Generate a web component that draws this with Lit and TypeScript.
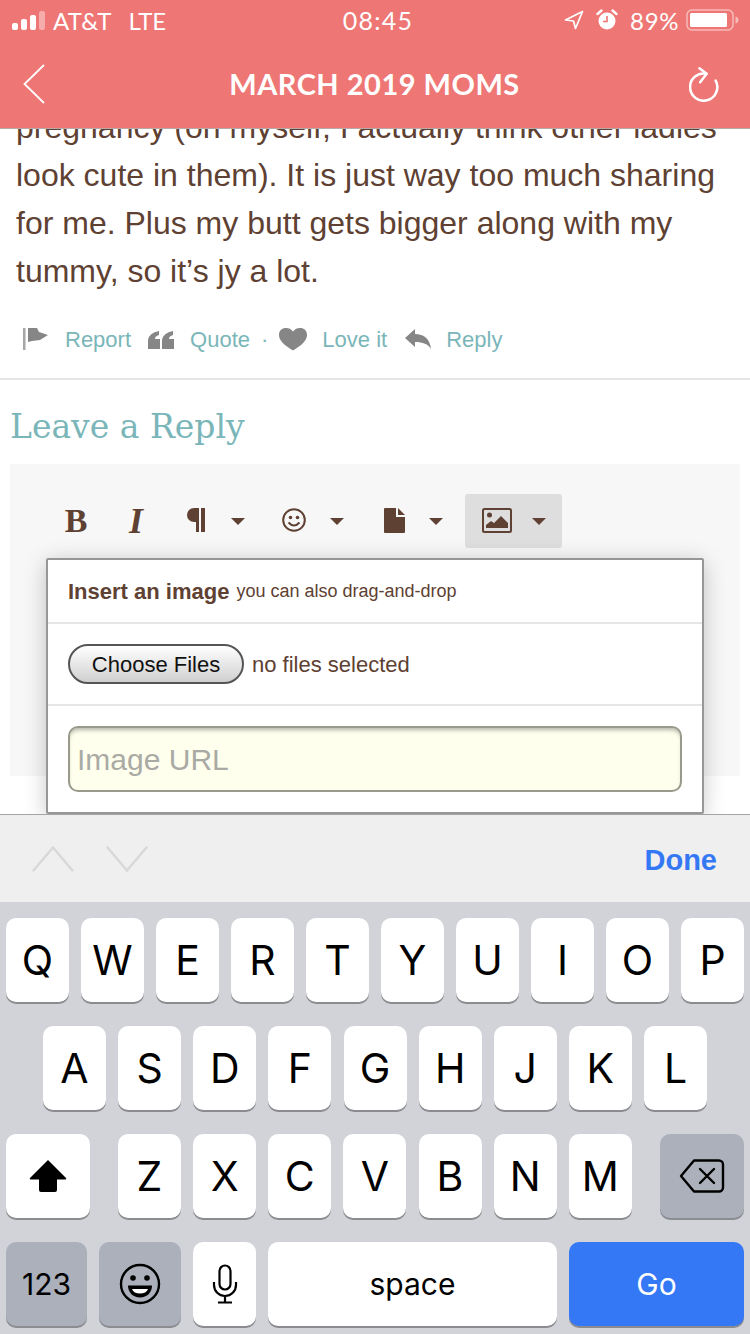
import { LitElement, html, css } from "lit";
import { customElement } from "lit/decorators.js";

const row1 = "QWERTYUIOP".split("");
const row2 = "ASDFGHJKL".split("");
const row3 = "ZXCVBNM".split("");

@customElement("app-root")
export class AppRoot extends LitElement {
  static styles = css`
    :host { display: block; width: 750px; height: 1334px; position: relative; overflow: hidden; background: #fff; font-family: "Liberation Sans", sans-serif; }
    .top { height: 129px; background: #ee7674; color: #fff; border-bottom: 1px solid #b9a9a6; box-sizing: border-box; position: relative; z-index: 2; margin-bottom: -1px; }
    .status { height: 40px; display: flex; align-items: center; font-family: Lato, sans-serif; font-size: 24px; padding: 0 10px 0 12px; position: relative; }
    .signal { display: flex; align-items: flex-end; gap: 3px; height: 19px; margin-right: 8px; }
    .signal i { display: block; width: 6px; background: #fff; border-radius: 2px; }
    .signal i.dim { background: rgba(255,255,255,.4); }
    .carrier { letter-spacing: .1px; }
    .lte { margin-left: 17px; letter-spacing: -.3px; }
    .time { position: absolute; left: 6px; right: 0; text-align: center; font-size: 25px; letter-spacing: 1.2px; }
    .sright { margin-left: auto; display: flex; align-items: center; }
    .pct { margin: 0 7px 0 12px; letter-spacing: .6px; }
    .nav { height: 87px; display: grid; grid-template-columns: 1fr auto 1fr; align-items: center; padding: 0 31px 0 22px; }
    .nav svg:last-child { justify-self: end; }
    .title { font-family: Lato, sans-serif; font-weight: 700; font-size: 29px; letter-spacing: .5px; margin-left: 8px; }
    .content { height: 686px; overflow: hidden; position: relative; }
    .post { margin: -25px 0 0; padding: 0 16px; font-size: 32px; line-height: 48px; color: #5e4132; white-space: nowrap; }
    .actions { display: flex; align-items: center; height: 48px; margin-top: 21px; padding-left: 23px; color: #7ab6b9; font-size: 22px; }
    .actions span { display: block; }
    .icon { display: flex; position: relative; top: 2px; }
    .rule { height: 2px; background: #e5e5e5; margin-top: 14px; }
    h2 { margin: 27px 0 0 10px; font-family: "DejaVu Serif", serif; font-weight: 400; font-size: 33px; line-height: 40px; color: #7ab6b9; }
    .editor { margin: 17px 10px 0; height: 312px; background: #f7f7f7; padding: 30px 0 0 38px; box-sizing: border-box; }
    .tools { display: flex; align-items: center; height: 54px; color: #5e4132; }
    .tool { display: flex; align-items: center; justify-content: center; }
    .tool svg { position: relative; top: -1px; }
    .bold { width: 22px; margin-left: 17px; font: 700 34px "Liberation Serif", serif; }
    .ital { width: 20px; margin-left: 39px; font: italic 700 36px "Liberation Serif", serif; }
    .caret { width: 0; height: 0; border-left: 7px solid transparent; border-right: 7px solid transparent; border-top: 7px solid #5e4132; }
    .active { background: #dedede; border-radius: 3px; height: 54px; width: 97px; gap: 20px; margin-left: 22px; }
    .popup { position: absolute; left: 46px; top: 430px; width: 658px; height: 256px; box-sizing: border-box; background: #fff; border: 2px solid #979797; border-radius: 2px; box-shadow: 0 4px 22px rgba(0,0,0,.22); color: #5e4132; }
    .ph { height: 61px; display: flex; align-items: center; padding: 1px 0 0 20px; font-size: 18px; border-bottom: 2px solid #e5e5e5; }
    .ph b { font-size: 22px; margin-right: 7px; }
    .pf { height: 80px; display: flex; align-items: center; padding-left: 20px; font-size: 22px; border-bottom: 2px solid #e5e5e5; }
    .file { width: 176px; height: 40px; box-sizing: border-box; border: 2px solid #555; border-radius: 20px; background: linear-gradient(#fff, #d0d0d0); color: #111; display: flex; align-items: center; justify-content: center; margin-right: 8px; font-size: 22px; padding-top: 2px; }
    .fname { padding-top: 2px; }
    .pu { padding: 20px; }
    .url { height: 66px; box-sizing: border-box; border: 2px solid #9a9a8c; border-radius: 10px; background: #ffffee; box-shadow: inset 0 4px 4px -2px rgba(0,0,0,.3); display: flex; align-items: center; padding: 2px 0 0 7px; color: #aaaaa5; font-size: 30px; }
    .acc { height: 88px; box-sizing: border-box; background: #efefef; border-top: 1px solid #a4a4a4; display: flex; align-items: center; padding: 0 33px 0 32px; position: relative; z-index: 1; }
    .done { margin-left: auto; color: #3478f6; font-size: 29px; font-weight: 700; padding-top: 3px; }
    .kbd { height: 432px; background: #d1d3d9; box-sizing: border-box; padding-top: 16px; font-family: Inter, sans-serif; color: #000; }
    .kr { display: flex; gap: 12.125px; height: 84px; margin-bottom: 24px; padding-left: 6px; }
    .kr1 { gap: 12px; }
    .kr2 { padding-left: 43px; }
    .k { width: 63px; height: 84px; background: #fff; border-radius: 10px; box-shadow: 0 2px 0 #8b8c90; display: flex; align-items: center; justify-content: center; font-size: 41px; flex: none; }
    .k.g { background: #abb0bb; }
    .shift { width: 84px; margin-right: 15.875px; }
    .back { margin-left: 16px; width: 84px; }
    .kr4 { gap: 12px; }
    .n123 { width: 81px; font-size: 30px; }
    .emo { width: 82px; }
    .space { width: 289px; font-size: 30px; }
    .go { width: 175px; background: #3478f6; color: #fff; font-size: 30px; }
    .acc-next { margin-left: 32px; }
  `;

  private flag() { return html`<svg width="26" height="24" viewBox="0 0 26 24"><rect x="0" y="1" width="2.500" height="22" fill="#a6a6a6"/><path d="M5 1h9l2 4 9 3-8 5-8 1-4 1z" fill="#868686"/></svg>`; }
  private quote() { return html`<svg width="26" height="18" viewBox="0 0 26 18"><path d="M0 9Q1 2 11 0v4Q7 5 7 8h5v10H0zM14 9Q15 2 25 0v4Q21 5 21 8h5v10H14z" fill="#868686"/></svg>`; }
  private heart() { return html`<svg width="28" height="24" viewBox="0 0 28 24"><path d="M14 23.500C5 18 0 13.500 0 8c0-4.500 3-7 7-7 3 0 5 1 7 3.500C16 2 18 1 21 1c4 0 7 2.500 7 7 0 5.500-5 10-14 15.500z" fill="#868686"/></svg>`; }
  private reply() { return html`<svg width="26" height="20" viewBox="0 0 26 20"><path d="M10 0v5c9 0 15 5 16 15-3-5-8-7-16-7v5L0 9z" fill="#868686"/></svg>`; }

  render() {
    return html`
      <div class="top">
        <div class="status">
          <div class="signal"><i style="height:7px"></i><i style="height:11px"></i><i style="height:15px"></i><i class="dim" style="height:19px"></i></div>
          <span class="carrier">AT&amp;T</span><span class="lte">LTE</span>
          <span class="time">08:45</span>
          <div class="sright">
            <svg width="20" height="20" viewBox="0 0 20 20"><path d="M18.500 1.500 1.500 10l8 1 2 7.500z" fill="none" stroke="#fff" stroke-width="1.700" stroke-linejoin="round"/></svg>
            <svg style="margin-left:12px" width="22" height="22" viewBox="0 0 22 22"><circle cx="11" cy="12" r="8.500" fill="#fff"/><path d="M11 7v5.500H7" fill="none" stroke="#ee7674" stroke-width="1.600"/><path d="M1.500 5l4-3.500M20.500 5l-4-3.500" stroke="#fff" stroke-width="2.400" stroke-linecap="round"/></svg>
            <span class="pct">89%</span>
            <svg width="54" height="24" viewBox="0 0 54 24"><rect x="1" y="2" width="46" height="20" rx="5" fill="none" stroke="#fff" stroke-opacity=".5" stroke-width="1.500"/><rect x="4" y="5" width="37" height="14" rx="1.500" fill="#fff"/><path d="M49.500 8.500c2 .4 3 2 3 3.500s-1 3-3 3.500z" fill="#fff" fill-opacity=".5"/></svg>
          </div>
        </div>
        <div class="nav">
          <svg width="24" height="40" viewBox="0 0 24 40"><path d="M22 1 2.500 20 22 39" fill="none" stroke="#fff" stroke-width="1.800"/></svg>
          <span class="title">MARCH 2019 MOMS</span>
          <svg width="30" height="36" viewBox="0 0 30 37"><path d="M17.700 8A14 14 0 1 0 27 15" fill="none" stroke="#fff" stroke-width="2.600" stroke-linecap="round"/><path d="M10.300 2.300 17.700 8 11 16.700" fill="none" stroke="#fff" stroke-width="2.600" stroke-linecap="round" stroke-linejoin="round"/></svg>
        </div>
      </div>
      <div class="content">
        <div class="post">
          pregnancy (oh myself, I actually think other ladies<br>
          look cute in them). It is just way too much sharing<br>
          for me. Plus my butt gets bigger along with my<br>
          tummy, so it’s jy a lot.
        </div>
        <div class="actions">
          <span class="icon">${this.flag()}</span><span style="margin-left:16px">Report</span>
          <span class="icon" style="margin-left:17px">${this.quote()}</span><span style="margin-left:16px">Quote</span>
          <span style="margin-left:11px">·</span>
          <span class="icon" style="margin-left:11px">${this.heart()}</span><span style="margin-left:15px">Love it</span>
          <span class="icon" style="margin-left:18px">${this.reply()}</span><span style="margin-left:15px">Reply</span>
        </div>
        <div class="rule"></div>
        <h2>Leave a Reply</h2>
        <div class="editor">
          <div class="tools">
            <div class="tool bold">B</div>
            <div class="tool ital">I</div>
            <div class="tool" style="margin-left:39px"><svg width="22" height="26" viewBox="0 0 22 26"><path d="M11 1H9a7 7 0 0 0 0 14h2v10h3V1zM16 1h4v24h-4z" fill="#5e4132"/></svg></div>
            <div class="caret" style="margin-left:24px"></div>
            <div class="tool" style="margin-left:37px"><svg width="24" height="24" viewBox="0 0 24 24"><circle cx="12" cy="12" r="10.800" fill="none" stroke="#5e4132" stroke-width="2"/><circle cx="8.500" cy="9.500" r="1.800" fill="#5e4132"/><circle cx="15.500" cy="9.500" r="1.800" fill="#5e4132"/><path d="M6.500 14.500q5.500 6 11 0" fill="none" stroke="#5e4132" stroke-width="2"/></svg></div>
            <div class="caret" style="margin-left:24px"></div>
            <div class="tool" style="margin-left:40px"><svg width="21" height="25" viewBox="0 0 21 25"><path d="M1 0h11v9h9v15a1 1 0 0 1-1 1H1a1 1 0 0 1-1-1V1a1 1 0 0 1 1-1zM14 0l7 7h-7z" fill="#5e4132"/></svg></div>
            <div class="caret" style="margin-left:24px"></div>
            <div class="tool active">
              <svg width="30" height="25" viewBox="0 0 30 25"><rect x="1" y="1" width="28" height="23" rx="1.500" fill="none" stroke="#5e4132" stroke-width="2"/><circle cx="7.500" cy="7" r="2.500" fill="#5e4132"/><path d="M4 20v-3l5-4 3 2 7-7 7 7v5z" fill="#5e4132"/></svg>
              <div class="caret"></div>
            </div>
          </div>
        </div>
        <div class="popup">
          <div class="ph"><b>Insert an image</b> you can also drag-and-drop</div>
          <div class="pf"><div class="file">Choose Files</div><span class="fname">no files selected</span></div>
          <div class="pu"><div class="url">Image URL</div></div>
        </div>
      </div>
      <div class="acc">
        <svg width="42" height="26" viewBox="0 0 42 26"><path d="M1.500 24.500 21 1.500l19.500 23" fill="none" stroke="#d8d8d8" stroke-width="2.400" stroke-linecap="round"/></svg>
        <svg class="acc-next" width="42" height="26" viewBox="0 0 42 26"><path d="M1.500 1.500 21 24.500 40.500 1.500" fill="none" stroke="#d8d8d8" stroke-width="2.400" stroke-linecap="round"/></svg>
        <span class="done">Done</span>
      </div>
      <div class="kbd">
        <div class="kr kr1">${row1.map((k) => html`<div class="k">${k}</div>`)}</div>
        <div class="kr kr2">${row2.map((k) => html`<div class="k">${k}</div>`)}</div>
        <div class="kr">
          <div class="k shift"><svg width="38" height="34" viewBox="0 0 38 34"><path d="M19 1 37 19a.8.8 0 0 1-.6 1.400H28V31a2 2 0 0 1-2 2H12a2 2 0 0 1-2-2V20.400H1.600A.8.800 0 0 1 1 19z" fill="#000"/></svg></div>
          ${row3.map((k) => html`<div class="k">${k}</div>`)}
          <div class="k g back"><svg width="46" height="34" viewBox="0 0 46 34"><path d="M15 1.500h25a4 4 0 0 1 4 4v23a4 4 0 0 1-4 4H15L2 17z" fill="none" stroke="#000" stroke-width="2.400" stroke-linejoin="round"/><path d="M21 10l14 14M35 10 21 24" stroke="#000" stroke-width="2.400" stroke-linecap="round"/></svg></div>
        </div>
        <div class="kr kr4">
          <div class="k g n123">123</div>
          <div class="k g emo"><svg width="42" height="42" viewBox="0 0 42 42"><circle cx="21" cy="21" r="19" fill="none" stroke="#000" stroke-width="2.400"/><circle cx="14" cy="15" r="2.800"/><circle cx="28" cy="15" r="2.800"/><path d="M9 22.500h24c0 7-5 12-12 12S9 29.500 9 22.500z" fill="#000"/><path d="M13 26h16c-1 3-4 4.500-8 4.500s-7-1.500-8-4.500z" fill="#fff"/></svg></div>
          <div class="k"><svg width="26" height="40" viewBox="0 0 26 40"><rect x="7.500" y="1.500" width="11" height="24" rx="5.500" fill="none" stroke="#000" stroke-width="2.200"/><path d="M2 18v3a11 11 0 0 0 22 0v-3M13 32v6M6 38.500h14" fill="none" stroke="#000" stroke-width="2.200"/></svg></div>
          <div class="k space">space</div>
          <div class="k go">Go</div>
        </div>
      </div>
    `;
  }
}
